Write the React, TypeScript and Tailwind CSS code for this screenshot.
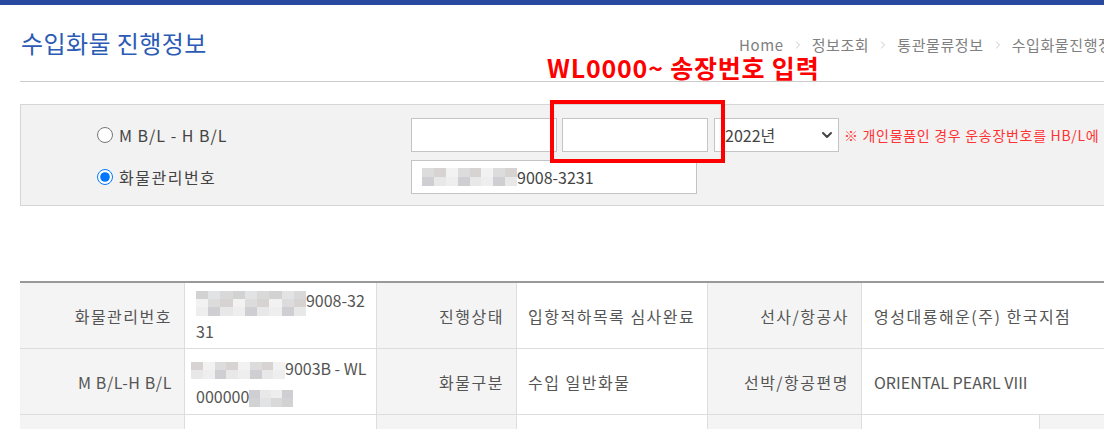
import React from "react";
import { ChevronRight, ChevronDown } from "lucide-react";

// greys used for the pixelated (masked) parts of the numbers
const greys = [
  "#e8e8e8",
  "#dcdcdc",
  "#d2d2d2",
  "#eeeeee",
  "#d8d3d3",
  "#e2e3e5",
  "#cfcfd3",
  "#f2f2f2",
  "#d9d9d9",
];

function Mosaic({
  cols,
  rows,
  w,
  h,
  seed = 0,
}: {
  cols: number;
  rows: number;
  w: number;
  h: number;
  seed?: number;
}) {
  const cw = w / cols;
  const rh = h / rows;
  return (
    <span className="inline-flex flex-col align-middle">
      {Array.from({ length: rows }).map((_, r) => (
        <span key={r} className="flex">
          {Array.from({ length: cols }).map((_, c) => (
            <span
              key={c}
              style={{
                width: cw,
                height: rh,
                backgroundColor: greys[(r * 5 + c * 3 + seed) % greys.length],
              }}
            />
          ))}
        </span>
      ))}
    </span>
  );
}

function Label({ children }: { children?: React.ReactNode }) {
  return (
    <div className="bg-[#f4f4f4] border-r border-b border-[#dddddd] flex items-center justify-end pr-[12px] text-[16px] tracking-[1.5px] text-[#555555]">
      {children}
    </div>
  );
}

function Value({
  children,
  span,
}: {
  children?: React.ReactNode;
  span?: boolean;
}) {
  return (
    <div
      className={
        span
          ? "col-span-3 bg-white border-b border-[#dddddd] flex items-center pl-[12px] text-[16px] tracking-[1.5px] text-[#555555]"
          : "bg-white border-r border-b border-[#dddddd] flex items-center pl-[11px] text-[16px] tracking-[1.5px] text-[#555555]"
      }
    >
      {children}
    </div>
  );
}

function Crumbs() {
  const items = ["Home", "정보조회", "통관물류정보", "수입화물진행정보"];
  return (
    <div className="flex items-center mt-[32px] h-[16px] text-[15px] leading-[16px] tracking-[0.6px] text-[#808080] whitespace-nowrap">
      {items.map((it, i) => (
        <React.Fragment key={it}>
          {i > 0 && (
            <ChevronRight
              className="w-[12px] h-[12px] mx-[8px] text-[#b8b8b8]"
              strokeWidth={1.6}
            />
          )}
          <span>{it}</span>
        </React.Fragment>
      ))}
    </div>
  );
}

export default function App() {
  return (
    <div className="relative w-[1104px] h-[429px] overflow-hidden bg-white font-['Noto_Sans_CJK_KR','Noto_Sans',sans-serif]">
      <div className="h-[5px] bg-[#2948a0]" />

      <div className="pl-[20px] w-[1250px]">
        {/* title + breadcrumb */}
        <div className="flex h-[77px] border-b border-[#cccccc]">
          <h1 className="w-[719px] pt-[22px] pl-[1px] text-[24px] leading-[32px] tracking-[0.4px] font-normal text-[#2b5bb5]">
            수입화물 진행정보
          </h1>
          <Crumbs />
        </div>

        {/* search box */}
        <div className="mt-[22px] border border-[#d6d6d6] bg-[#f2f2f2] pt-[13px] pb-[11px] flex flex-col gap-[8px]">
          <div className="flex items-center h-[34px]">
            <label className="w-[390px] pl-[76px] flex items-center gap-[6px] text-[16px] tracking-[1px] text-[#444444]">
              <input
                type="radio"
                name="kind"
                className="w-[16px] h-[16px] m-0 accent-[#0075ff]"
              />
              M B/L - H B/L
            </label>
            <div className="w-[146px] h-[34px] border border-[#c4c4c4] bg-white" />
            <div className="ml-[5px] w-[146px] h-[34px] border border-[#c4c4c4] bg-white" />
            <div className="ml-[6px] w-[125px] h-[34px] border border-[#c4c4c4] bg-white flex items-center justify-between pl-[10px] pr-[3px] text-[16px] text-[#444444]">
              <span>2022년</span>
              <ChevronDown
                className="w-[16px] h-[16px] text-[#444444]"
                strokeWidth={3}
              />
            </div>
            <span className="ml-[5px] text-[14px] tracking-[0.7px] text-[#ff3333] whitespace-nowrap">
              ※ 개인물품인 경우 운송장번호를 HB/L에
            </span>
          </div>
          <div className="flex items-center h-[34px]">
            <label className="w-[390px] pl-[76px] flex items-center gap-[6px] text-[16px] tracking-[1.5px] text-[#444444]">
              <input
                type="radio"
                name="kind"
                defaultChecked
                className="w-[16px] h-[16px] m-0 accent-[#0075ff]"
              />
              화물관리번호
            </label>
            <div className="w-[286px] h-[34px] border border-[#c4c4c4] bg-white flex items-center pl-[10px] text-[16px] text-[#444444]">
              <Mosaic cols={8} rows={2} w={95} h={18} seed={1} />
              <span>9008-3231</span>
            </div>
          </div>
        </div>

        {/* result table */}
        <div className="mt-[75px] border-t-2 border-[#999999] grid grid-cols-[165px_192px_140px_191px_154px_178px_120px_1fr] auto-rows-[66px]">
          <Label>화물관리번호</Label>
          <Value>
            <div className="leading-[30px] tracking-normal">
              <Mosaic cols={9} rows={3} w={110} h={25} seed={2} />
              9008-32
              <br />
              31
            </div>
          </Value>
          <Label>진행상태</Label>
          <Value>입항적하목록 심사완료</Value>
          <Label>선사/항공사</Label>
          <Value span>영성대룡해운(주) 한국지점</Value>

          <Label>
            <span className="tracking-[0.6px]">M B/L-H B/L</span>
          </Label>
          <Value>
            <div className="leading-[28px] -ml-[5px] tracking-normal">
              <Mosaic cols={8} rows={2} w={94} h={17} seed={4} />
              9003B - WL
              <br />
              <span className="pl-[5px]">000000</span>
              <Mosaic cols={4} rows={2} w={44} h={17} seed={6} />
            </div>
          </Value>
          <Label>화물구분</Label>
          <Value>수입 일반화물</Value>
          <Label>선박/항공편명</Label>
          <Value span>
            <span className="tracking-normal">ORIENTAL PEARL VIII</span>
          </Value>

          <Label />
          <Value />
          <Label />
          <Value />
          <Label />
          <Value />
          <Label />
          <Value />
        </div>
      </div>

      {/* annotation drawn over the screenshot */}
      <div className="absolute left-[547px] top-[56px] text-[25px] leading-[22px] tracking-[0.8px] font-bold text-[#ff0000] whitespace-nowrap">
        WL0000~ 송장번호 입력
      </div>
      <div className="absolute left-[550px] top-[100px] w-[175px] h-[63px] border-4 border-[#ff0000]" />
    </div>
  );
}
